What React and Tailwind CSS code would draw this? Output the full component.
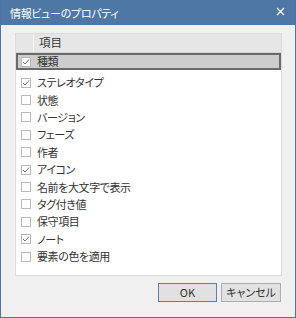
import React from 'react';

const items = [
  { label: '種類', checked: true, selected: true },
  { label: 'ステレオタイプ', checked: true },
  { label: '状態', checked: false },
  { label: 'バージョン', checked: false },
  { label: 'フェーズ', checked: false },
  { label: '作者', checked: false },
  { label: 'アイコン', checked: true },
  { label: '名前を大文字で表示', checked: false },
  { label: 'タグ付き値', checked: false },
  { label: '保守項目', checked: false },
  { label: 'ノート', checked: true },
  { label: '要素の色を適用', checked: false },
];

const font = { fontFamily: '"Noto Sans CJK JP", "Noto Sans", sans-serif' };

function Check({ checked }) {
  return (
    <span className="flex h-[10px] w-[10px] items-center justify-center border border-[#b9b9b9] bg-white">
      {checked && (
        <svg width="8" height="8" viewBox="0 0 8 8">
          <path d="M1 4 L3 6 L7 1.5" fill="none" stroke="#707070" strokeWidth="1" />
        </svg>
      )}
    </span>
  );
}

function Row({ item }) {
  return (
    <div
      className={`flex items-center ${
        item.selected ? 'h-[17px] border-2 border-[#6a6a6a] bg-[#cdcdcd]' : 'h-[17.4px] border-2 border-transparent'
      }`}
    >
      <div className="flex w-[13px] justify-end">
        <Check checked={item.checked} />
      </div>
      <span className="pl-[6px] text-[11px] leading-none tracking-[-0.4px] text-[#333] [font-feature-settings:'palt']">
        {item.label}
      </span>
    </div>
  );
}

export default function App() {
  return (
    <div className="flex h-[318px] w-[296px] flex-col border border-t-0 border-[#4c73a4] bg-[#f0f0f0] text-[#222]" style={font}>
      <div className="flex h-[25px] shrink-0 items-center justify-between bg-[#4f77a6] pl-[9px] pr-[10px] text-white">
        <span className="pt-[2px] text-[11px] tracking-[-0.3px] [font-feature-settings:'palt']">情報ビューのプロパティ</span>
        <svg width="9" height="9" viewBox="0 0 9 9" className="-mt-[3px]">
          <path d="M1 1 L8 8 M8 1 L1 8" stroke="white" strokeWidth="1.4" />
        </svg>
      </div>

      <div className="ml-[14px] mr-[13px] mt-[8px] flex h-[243px] shrink-0 flex-col border border-[#dcdcdc] bg-white">
        <div className="flex h-[19px] shrink-0 border-b border-[#d6d6d6] bg-[#e6e6e6]">
          <div className="w-[18px] border-r border-[#f7f7f7]" />
          <div className="flex items-center pl-[5px] text-[11.5px] text-[#333]">項目</div>
        </div>
        <Row item={items[0]} />
        <div className="h-[4px] shrink-0" />
        {items.slice(1).map((item) => (
          <Row key={item.label} item={item} />
        ))}
      </div>

      <div className="mr-[14px] mt-[7px] flex justify-end gap-[4px]">
        <button className="h-[19px] w-[59px] border border-[#5b7fae] bg-[#e1e1e1] text-[11px] leading-none text-[#333]">OK</button>
        <button className="h-[19px] w-[60px] border border-[#adadad] bg-[#e1e1e1] text-[11px] leading-none text-[#333] [font-feature-settings:'palt']">
          キャンセル
        </button>
      </div>
    </div>
  );
}
